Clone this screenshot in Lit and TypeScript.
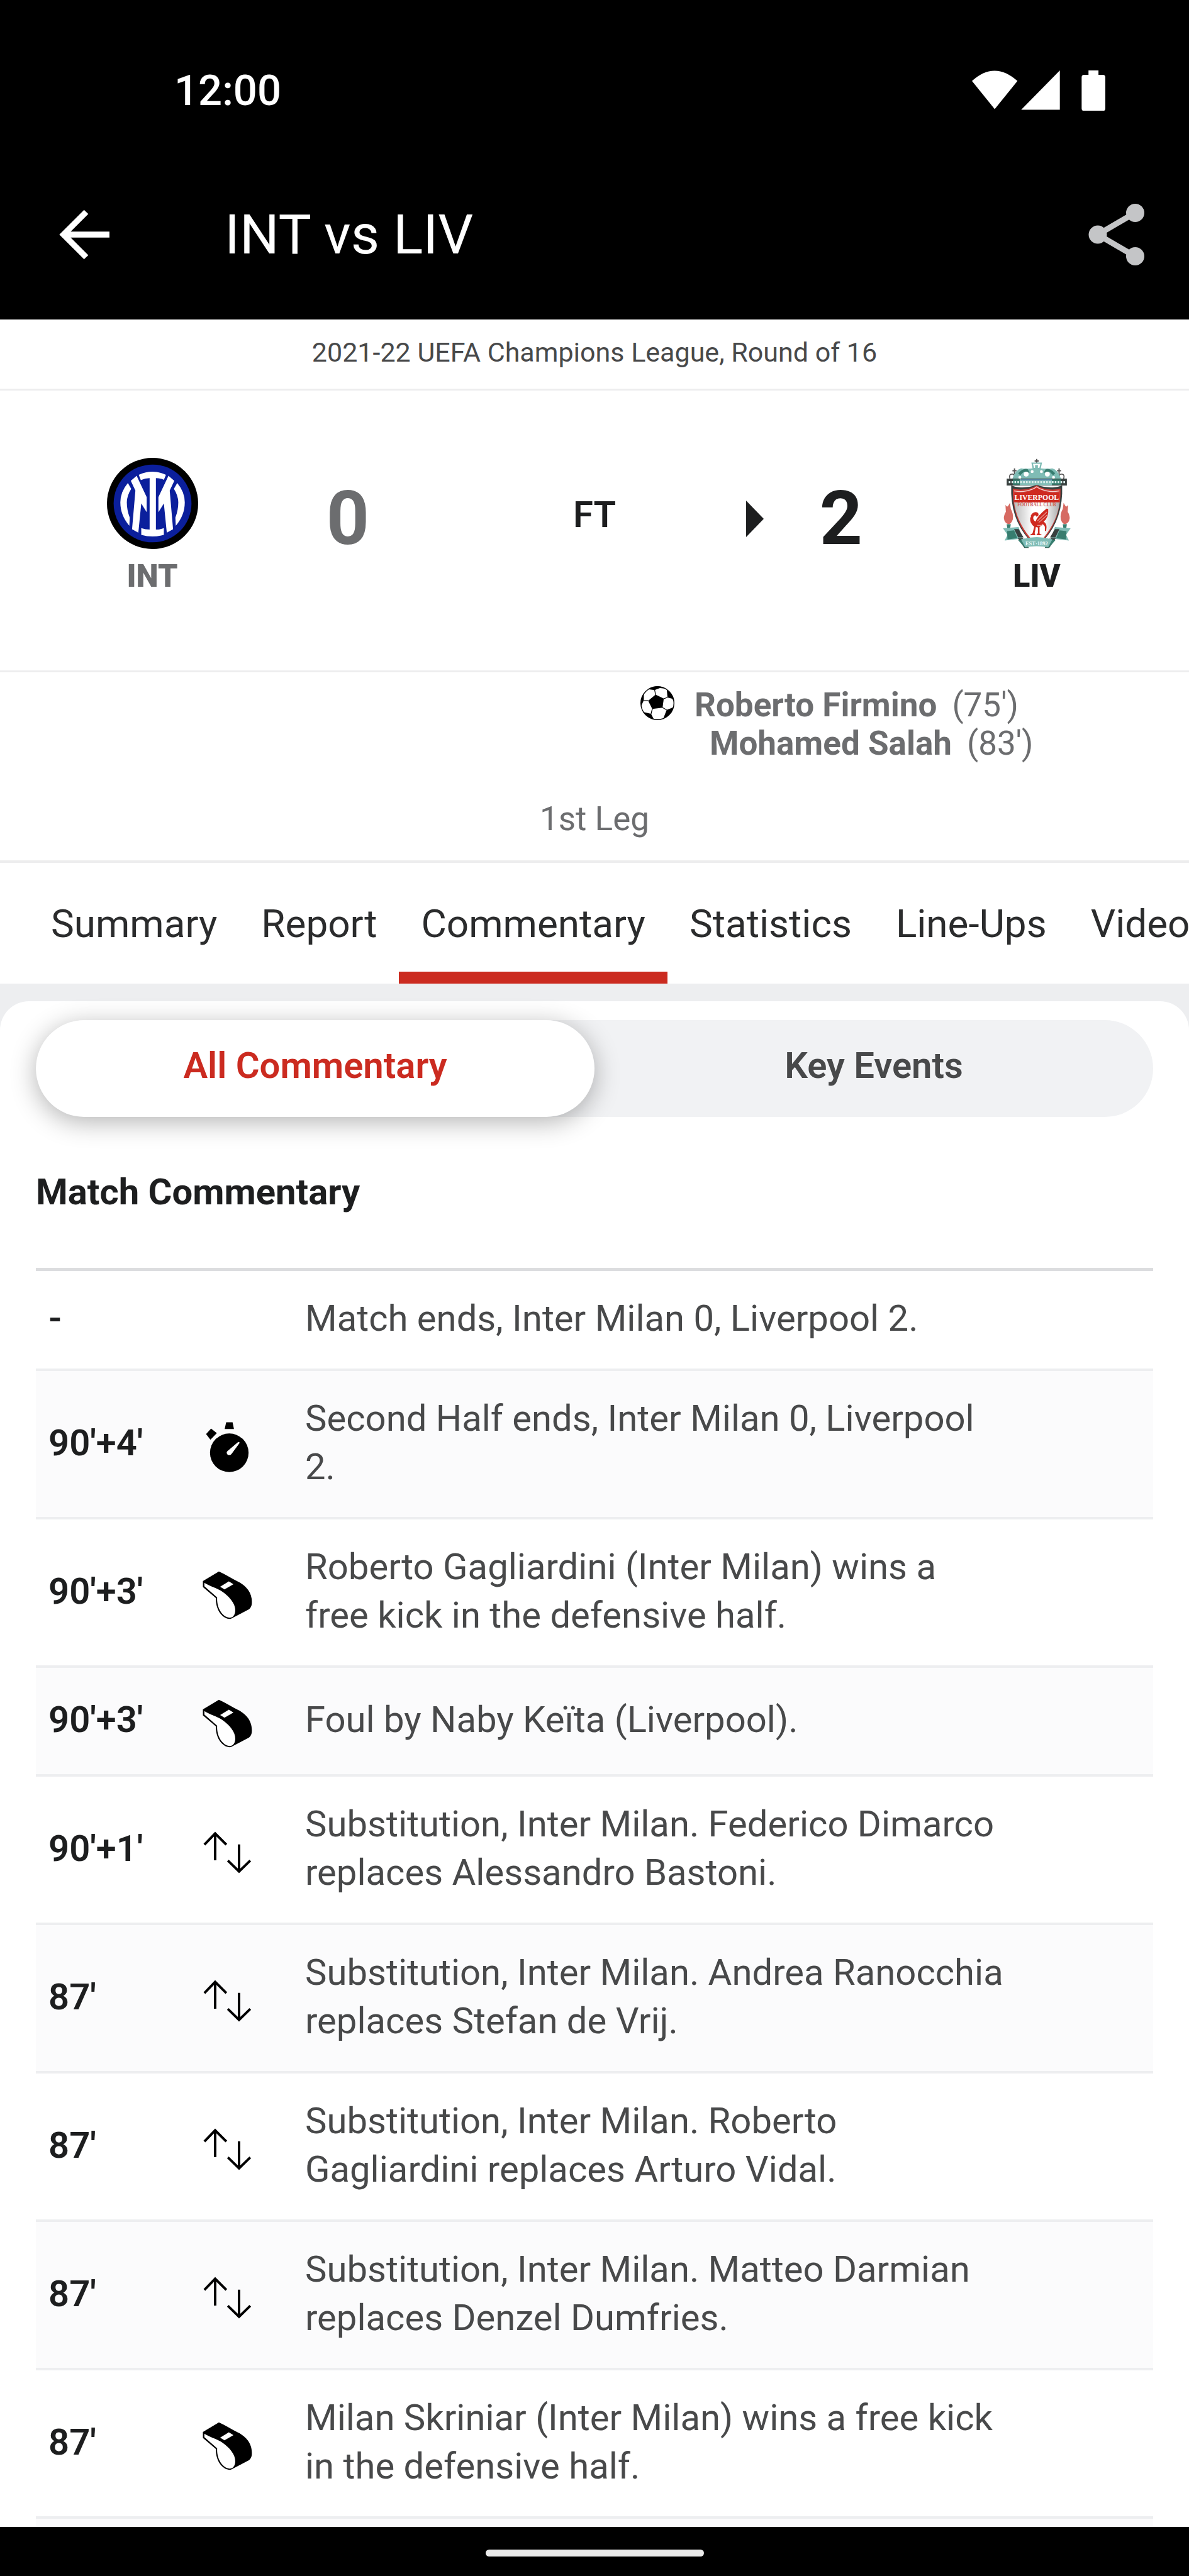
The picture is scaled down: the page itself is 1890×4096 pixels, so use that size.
import { LitElement, html, css, svg, nothing } from 'lit';
import { customElement, property, state } from 'lit/decorators.js';
import { classMap } from 'lit/directives/class-map.js';

type EventKind = 'none' | 'clock' | 'whistle' | 'sub';

interface CommentaryEntry {
  time: string;
  kind: EventKind;
  text: string;
}

const TABS = ['Summary', 'Report', 'Commentary', 'Statistics', 'Line-Ups', 'Videos'];

const FILTERS = ['All Commentary', 'Key Events'];

const SCORERS = [
  { name: 'Roberto Firmino', minute: `(75')` },
  { name: 'Mohamed Salah', minute: `(83')` },
];

const COMMENTARY: CommentaryEntry[] = [
  { time: '-', kind: 'none', text: 'Match ends, Inter Milan 0, Liverpool 2.' },
  { time: `90'+4'`, kind: 'clock', text: 'Second Half ends, Inter Milan 0, Liverpool 2.' },
  { time: `90'+3'`, kind: 'whistle', text: 'Roberto Gagliardini (Inter Milan) wins a free kick in the defensive half.' },
  { time: `90'+3'`, kind: 'whistle', text: 'Foul by Naby Keïta (Liverpool).' },
  { time: `90'+1'`, kind: 'sub', text: 'Substitution, Inter Milan. Federico Dimarco replaces Alessandro Bastoni.' },
  { time: `87'`, kind: 'sub', text: 'Substitution, Inter Milan. Andrea Ranocchia replaces Stefan de Vrij.' },
  { time: `87'`, kind: 'sub', text: 'Substitution, Inter Milan. Roberto Gagliardini replaces Arturo Vidal.' },
  { time: `87'`, kind: 'sub', text: 'Substitution, Inter Milan. Matteo Darmian replaces Denzel Dumfries.' },
  { time: `87'`, kind: 'whistle', text: 'Milan Skriniar (Inter Milan) wins a free kick in the defensive half.' },
];

/**
 * Icon for one kind of match event.
 *
 * @element event-icon
 */
@customElement('event-icon')
export class EventIcon extends LitElement {

  @property({ type: String })
  kind: EventKind = 'none';

  static styles = css`
    :host { display: block; }

    svg {
      display: block;
      width: 91px;
      height: 91px;
    }
  `;

  private _shape() {
    switch (this.kind) {
      case 'clock':
        return svg`
          <circle cx="49" cy="55.6" r="31"/>
          <path d="M44 6.6h10.3l2.2 10.8H41.6z"/>
          <path d="M11.7 25.5 19.7 16.8 29 24 18.7 34.7z"/>
          <path fill="#fff" d="M45.6 53.4 62.5 38.8q2.6-1.6 3.2 1L52.5 57.6q-2.8 3.2-6.2 1-2.6-2.8-.7-5.2z"/>`;
      case 'whistle':
        return svg`
          <path d="M6.6 23.2 32.3 7.8C42 12 52 18.500 62.300 23.800 74 29.500 85.500 40 85.300 57 85.300 64 83 67 79 69.600L51.500 84C40 85 27 72 27.400 50.500L6.600 32.800z"/>
          <path fill="#fff" d="M9 26C18 32 29 34 38 40.500 50 49 59 60 58.600 71 58 80 53 83 48 81.800 37 80 28.500 65 29.500 49.500L9 31.500z"/>
          <path fill="#fff" d="M34.300 32.400 48.300 23.800 55.700 28.300 41.300 36.700z"/>`;
      case 'sub':
        return svg`
          <g fill="none" stroke="#000" stroke-width="4">
            <path d="M26.300 58.700V15M9 33.500 26.300 15.500 44.300 33.500"/>
            <path d="M64.700 33V77M46.700 59 64.700 76.500 82.700 59"/>
          </g>`;
      default:
        return nothing;
    }
  }

  render() {
    if (this.kind === 'none') return nothing;
    return html`<svg viewBox="0 0 92 92" aria-hidden="true">${this._shape()}</svg>`;
  }
}

/**
 * Club crest.
 *
 * @element team-crest
 */
@customElement('team-crest')
export class TeamCrest extends LitElement {

  @property({ type: String })
  team: 'INT' | 'LIV' = 'INT';

  static styles = css`
    :host { display: block; }

    svg {
      display: block;
      height: 145px;
    }

    text { font-family: "Liberation Serif", serif; }
  `;

  private _inter() {
    const side = svg`
      <path d="M114 110 142 86 190 188V260L164 218 150 358 120 341 136 156z"/>
      <path d="M100 120 116 148Q95 182 95 213 95 250 109 286L107 325Q64 275 64 213 64 163 100 120z"/>`;
    return html`
      <svg viewBox="0 0 436 436" role="img" aria-label="Inter Milan">
        <circle cx="218" cy="218" r="218"/>
        <circle cx="218" cy="218" r="186" fill="#0b1f9c"/>
        <g fill="#fff">
          <path d="M152 81Q218 51 282 81L272 105Q254 97 234 97V343Q254 343 272 336V368Q218 384 164 368V336Q184 343 204 343V97Q182 97 162 107z"/>
          ${side}
          <g transform="matrix(-1 0 0 1 436 0)">${side}</g>
        </g>
      </svg>
    `;
  }

  private _liverpool() {
    return html`
      <svg viewBox="183 55 332 444" role="img" aria-label="Liverpool">
        <defs>
          <linearGradient id="shield">
            <stop offset="0" stop-color="#bbb"/>
            <stop offset=".4" stop-color="#fff"/>
            <stop offset=".65" stop-color="#fff"/>
            <stop offset="1" stop-color="#aaa"/>
          </linearGradient>
        </defs>
        <!-- gates -->
        <g fill="none" stroke="#555" stroke-width="6">
          <path d="M348 60v20M338 70h20M240 106v30M230 118h20M457 106v30M447 118h20"/>
          <path stroke-width="5" d="M218 158q-8-24 12-24 14 4 10 24M260 158q4-22-12-22M479 158q8-24-12-24-14 4-10 24M437 158q-4-22 12-22"/>
        </g>
        <path fill="#7fbcb5" d="M322 78h52l-6 28q36 4 56 0 26 6 42 50H230q16-44 42-50 20 4 56 0z"/>
        <path fill="#377d6f" d="M258 130q24-26 46-20l10 18-30-4-16 16zM438 130q-24-26-46-20l-10 18 30-4 16 16z"/>
        <g fill="#fff">
          <path d="M330 84h36l-5 20h-26z"/>
          <circle cx="297" cy="134" r="12"/>
          <circle cx="400" cy="134" r="12"/>
          <circle cx="326" cy="122" r="7"/>
          <circle cx="371" cy="122" r="7"/>
          <circle cx="266" cy="150" r="7"/>
          <circle cx="430" cy="150" r="7"/>
        </g>
        <path fill="#7fbcb5" d="M340 90h14v60h-14z"/>
        <path fill="#38403f" d="M202 156h293v34H202z"/>
        <path fill="#377d6f" d="M232 160h234v26H232z"/>
        <path fill="#7fbcb5" d="M266 160h156v28H266z"/>
        <path fill="none" stroke="#d9ecea" stroke-width="10" stroke-dasharray="8 6" d="M212 173h274"/>
        <path fill="none" stroke="#4a68b0" stroke-width="3" d="M272 162h150"/>
        <!-- flames -->
        <g fill="#d66a62">
          <path d="M196 284q8 14 14 4l8-14 4 30q14 24 10 50-8 24-22 24-18-4-22-30 2-20 10-30z"/>
          <path d="M501 284q-8 14-14 4l-8-14-4 30q-14 24-10 50 8 24 22 24 18-4 22-30-2-20-10-30z"/>
        </g>
        <path fill="#377d6f" d="M202 378h20l-4 26h-12zM475 378h20l-4 26h-12z"/>
        <!-- ribbon -->
        <path fill="#7fbcb5" d="M184 398l76-6 20 56-88 10 14-28zM513 398l-76-6-20 56 88 10-14-28z"/>
        <path fill="#377d6f" d="M204 412l34-4 16 38-48 6zM493 412l-34-4-16 38 48 6z"/>
        <path fill="#38403f" d="M238 402h22l24 40h-26zM459 402h-22l-24 40h26z"/>
        <!-- shield -->
        <path fill="#38403f" d="M224 190q30 12 62 8 34-2 62-10 28 8 62 10 32 4 62-8 6 160-86 262H310Q218 350 224 190z"/>
        <path fill="#cc3b35" d="M232 204q30 8 58 4 36-4 58-20 22 16 58 20 28 4 58-4 4 146-80 246H312Q228 350 232 204z"/>
        <path fill="url(#shield)" d="M238 272h222q-12 92-78 172h-66Q250 364 238 272z"/>
        <path fill="none" stroke="#f3d4d1" stroke-width="4" d="M238 216q34 6 60 0 32-6 50-20 18 14 50 20 26 6 60 0"/>
        <path fill="#cf2a20" d="M240 226q60 6 108-24 48 30 108 24v44H240z"/>
        <text x="348" y="261" fill="#fff" font-size="36" font-weight="700" text-anchor="middle">LIVERPOOL</text>
        <text x="348" y="292" fill="#cf5a54" font-size="22" font-weight="700" text-anchor="middle">FOOTBALL CLUB</text>
        <!-- liver bird -->
        <path fill="#cf2a20" d="M318 338q12-22 30-18 12 4 8 16l-8 6-8-8-8 8q-4 14 10 24 10-30 54-64l8 2q4 40-22 62 14 8 14 26l-2 20-6-2v-20q-4-10-14-12-2 10-12 14v32l12 8h-28l8-10v-28l-10-2-6 30 4 10h-28l14-10 8-32q-22-16-20-40l6-14z"/>
        <path fill="none" stroke="#e89c97" stroke-width="4" d="M352 362l46-44M358 370l40-36M350 384h24"/>
        <!-- scroll -->
        <path fill="#38403f" d="M256 446h24l30 48h-22zM441 446h-24l-30 48h22z"/>
        <path fill="#377d6f" d="M258 456l30-8 20 44h-18zM439 456l-30-8-20 44h18z"/>
        <path fill="#7fbcb5" d="M272 452q76-22 152 0l-20 38q-56-10-112 0z"/>
        <text x="348" y="480" fill="#f4fbfa" font-size="26" font-weight="700" text-anchor="middle">EST·1892</text>
      </svg>
    `;
  }

  render() {
    return this.team === 'INT' ? this._inter() : this._liverpool();
  }
}

/**
 * Match screen: header, score, tabs and commentary feed.
 *
 * @element app-root
 */
@customElement('app-root')
export class AppRoot extends LitElement {

  @state()
  private _tab = 'Commentary';

  @state()
  private _filter = 'All Commentary';

  static styles = css`
    :host {
      display: flex;
      flex-direction: column;
      height: 100vh;
      overflow: hidden;
      background: #fff;
      color: #1d1e1f;
      font-family: Roboto, "Noto Sans", sans-serif;
      font-size: 58px;
      line-height: 77px;
    }

    button {
      border: none;
      padding: 0;
      background: none;
      color: inherit;
      font: inherit;
      cursor: pointer;
    }

    svg { display: block; }

    h1, h2, ul, p { margin: 0; padding: 0; }

    /* ── Top bars ──────────────────────────────────────────── */
    .top {
      flex: none;
      background: #000;
      color: #fff;
    }

    .status-bar {
      display: flex;
      align-items: center;
      justify-content: space-between;
      height: 188px;
      padding: 50px 133px 0 277px;
      font-size: 67px;
      font-weight: 500;
    }

    .status-icons { width: 212px; }

    .app-bar {
      display: flex;
      align-items: center;
      height: 270px;
      padding: 0 70px 0 94px;
    }

    .app-bar h1 {
      flex: 1;
      margin-left: 183px;
      font-size: 88px;
      font-weight: 400;
      line-height: 104px;
    }

    .back svg { width: 80px; }
    .share svg { width: 90px; }

    /* ── Match header ──────────────────────────────────────── */
    .competition {
      flex: none;
      padding: 24px 0 30px;
      border-bottom: 3px solid #ededee;
      color: #48494a;
      font-size: 43px;
      line-height: 56px;
      text-align: center;
    }

    .score {
      flex: none;
      display: flex;
      height: 445px;
      padding: 0 82px;
      border-bottom: 3px solid #ededee;
    }

    .team {
      display: flex;
      flex-direction: column;
      align-items: center;
      gap: 13px;
      width: 320px;
      padding-top: 107px;
      font-size: 50px;
      font-weight: 900;
      line-height: 60px;
    }

    .goals {
      display: grid;
      grid-template-columns: 1fr auto 1fr;
      align-items: center;
      width: 302px;
      padding-bottom: 38px;
      font-size: 119px;
      font-weight: 700;
    }

    .goals span { grid-column: 2; }

    .winner-mark { width: 28px; }

    .loser { color: #6c6d6f; }

    .clock {
      flex: 1;
      padding-top: 159px;
      font-weight: 600;
      text-align: center;
    }

    .summary {
      flex: none;
      padding: 22px 0 35px;
      border-bottom: 4px solid #ededee;
      color: #6c6d6f;
      font-size: 53px;
      line-height: 61px;
    }

    .scorers {
      display: flex;
      gap: 32px;
      margin-left: calc(50% + 73px);
    }

    .scorers svg {
      width: 54px;
      height: 54px;
    }

    .scorers ul { list-style: none; }

    .scorers li {
      display: flex;
      gap: 24px;
    }

    .scorers li + li { padding-left: 24px; }

    .scorers strong { font-weight: 700; }

    .leg {
      padding-top: 59px;
      text-align: center;
    }

    /* ── Tabs ──────────────────────────────────────────────── */
    .tabs {
      flex: none;
      display: flex;
      height: 192px;
      padding-left: 46px;
      overflow: hidden;
    }

    .tab {
      flex: none;
      padding: 19px 35px 0;
      border-bottom: 19px solid transparent;
      color: #2b2c2d;
      font-size: 62px;
    }

    .tab.active { border-color: #cb2b20; }

    /* ── Commentary ────────────────────────────────────────── */
    .feed {
      flex: 1;
      min-height: 0;
      overflow: hidden;
      padding-top: 28px;
      background: #edeef0;
    }

    .panel {
      padding: 30px 57px 0;
      border-radius: 46px 46px 0 0;
      background: #fff;
    }

    .filters {
      display: flex;
      height: 154px;
      border-radius: 77px;
      background: #f1f2f4;
    }

    .filter {
      flex: 1;
      padding-bottom: 10px;
      border-radius: 77px;
      color: #48494a;
      font-weight: 600;
    }

    .filter.active {
      background: #fff;
      box-shadow: 0 8px 40px rgba(0, 0, 0, 0.3);
      color: #cb2b20;
    }

    h2 {
      padding: 81px 0 82px;
      font-size: 58px;
      font-weight: 700;
    }

    table {
      width: 100%;
      border-top: 5px solid #dcdddf;
      border-spacing: 0;
      table-layout: fixed;
    }

    th, td {
      padding: 37px 0 41px;
      border-bottom: 4px solid #edeef0;
      text-align: left;
      vertical-align: middle;
    }

    tr:nth-child(even) { background: #fbfbfc; }

    .time {
      width: 223px;
      padding-left: 20px;
      font-weight: 600;
    }

    .icon {
      width: 122px;
      padding: 43px 0 35px;
    }

    .icon event-icon { padding-left: 16px; }

    .icon.empty { padding: 0; }

    .text {
      padding-left: 63px;
      padding-right: 236px;
      color: #48494a;
    }

    .peek td { height: 60px; }

    /* ── System navigation ─────────────────────────────────── */
    .nav-bar {
      flex: none;
      display: flex;
      justify-content: center;
      padding: 36px 0 31px;
      background: #000;
    }

    .nav-handle {
      width: 347px;
      height: 11px;
      border-radius: 6px;
      background: #ebebeb;
    }
  `;

  private _renderTop() {
    return html`
      <header class="top">
        <div class="status-bar">
          <span>12:00</span>
          <svg class="status-icons" viewBox="0 0 214 65" fill="#fff" aria-hidden="true">
            <path d="M0 17Q36-16 73 17L36.500 62z"/>
            <path d="M141 0v63H79z"/>
            <path d="M187 0h16v7h7q4 0 4 4v50q0 4-4 4h-30q-4 0-4-4V11q0-4 4-4h7z"/>
          </svg>
        </div>
        <div class="app-bar">
          <button class="back" aria-label="Back">
            <svg viewBox="0 0 80 80" fill="none" stroke="#fff" stroke-width="9.500">
              <path d="M80 40H9M43 4 7 40 43 76"/>
            </svg>
          </button>
          <h1>INT vs LIV</h1>
          <button class="share" aria-label="Share">
            <svg viewBox="0 0 90 100" fill="#c4c5c7">
              <path fill="none" stroke="#c4c5c7" stroke-width="9" d="M74 15.500 15 50 74 84.500"/>
              <circle cx="74.500" cy="15.500" r="14.500"/>
              <circle cx="15" cy="50" r="14.500"/>
              <circle cx="74.500" cy="84.500" r="14.500"/>
            </svg>
          </button>
        </div>
      </header>
    `;
  }

  private _renderScore() {
    return html`
      <p class="competition">2021-22 UEFA Champions League, Round of 16</p>
      <section class="score">
        <div class="team loser">
          <team-crest team="INT"></team-crest>
          INT
        </div>
        <div class="goals loser"><span>0</span></div>
        <div class="clock">FT</div>
        <div class="goals">
          <svg class="winner-mark" viewBox="0 0 28 58" fill="#1d1e1f" aria-hidden="true">
            <path d="M0 0 28 29 0 58z"/>
          </svg>
          <span>2</span>
        </div>
        <div class="team">
          <team-crest team="LIV"></team-crest>
          LIV
        </div>
      </section>
      <section class="summary">
        <div class="scorers">
          <svg viewBox="0 0 54 54" aria-label="Goals" role="img">
            <circle cx="27" cy="27" r="26.300" fill="#fff" stroke="#000" stroke-width="1.400"/>
            <path d="M24.100 13.600 37.100 19.800 35.200 34.300 18.800 36.300 12.300 23.200z"/>
            <path d="M13 5Q27-4 40 4L31 3 22.600 6.300z"/>
            <path d="M42 6Q53 13 53.500 25L50.500 20 43 18z"/>
            <path d="M53 33Q49 46 36 52.500L41.700 37.700 49 35z"/>
            <path d="M4 41Q10 50 21.500 53L16.900 43.900z"/>
            <path d="M5.500 11Q0 20 1 32L5.400 22.500z"/>
            <path fill="none" stroke="#000" stroke-width="1.200" d="M24.100 14 22.600 6M37 20 43 18M35 34 41.700 37.700M19 36 16.900 44M12.500 23.200H5.400"/>
          </svg>
          <ul>
            ${SCORERS.map(s => html`<li><strong>${s.name}</strong><span>${s.minute}</span></li>`)}
          </ul>
        </div>
        <p class="leg">1st Leg</p>
      </section>
    `;
  }

  private _renderTabs() {
    return html`
      <nav class="tabs" role="tablist">
        ${TABS.map(tab => html`
          <button
            class=${classMap({ tab: true, active: tab === this._tab })}
            role="tab"
            aria-selected=${tab === this._tab}
            @click=${() => { this._tab = tab; }}
          >${tab}</button>
        `)}
      </nav>
    `;
  }

  private _renderEntry(entry: CommentaryEntry) {
    return html`
      <tr>
        <th class="time" scope="row">${entry.time}</th>
        <td class=${classMap({ icon: true, empty: entry.kind === 'none' })}>
          <event-icon kind=${entry.kind}></event-icon>
        </td>
        <td class="text">${entry.text}</td>
      </tr>
    `;
  }

  render() {
    return html`
      ${this._renderTop()}
      ${this._renderScore()}
      ${this._renderTabs()}
      <main class="feed">
        <div class="panel">
          <div class="filters">
            ${FILTERS.map(filter => html`
              <button
                class=${classMap({ filter: true, active: filter === this._filter })}
                aria-pressed=${filter === this._filter}
                @click=${() => { this._filter = filter; }}
              >${filter}</button>
            `)}
          </div>
          <h2>Match Commentary</h2>
          <table>
            <tbody>
              ${COMMENTARY.map(entry => this._renderEntry(entry))}
              <tr class="peek"><td colspan="3"></td></tr>
            </tbody>
          </table>
        </div>
      </main>
      <footer class="nav-bar"><div class="nav-handle"></div></footer>
    `;
  }
}

declare global {
  interface HTMLElementTagNameMap {
    'app-root': AppRoot;
    'event-icon': EventIcon;
    'team-crest': TeamCrest;
  }
}
